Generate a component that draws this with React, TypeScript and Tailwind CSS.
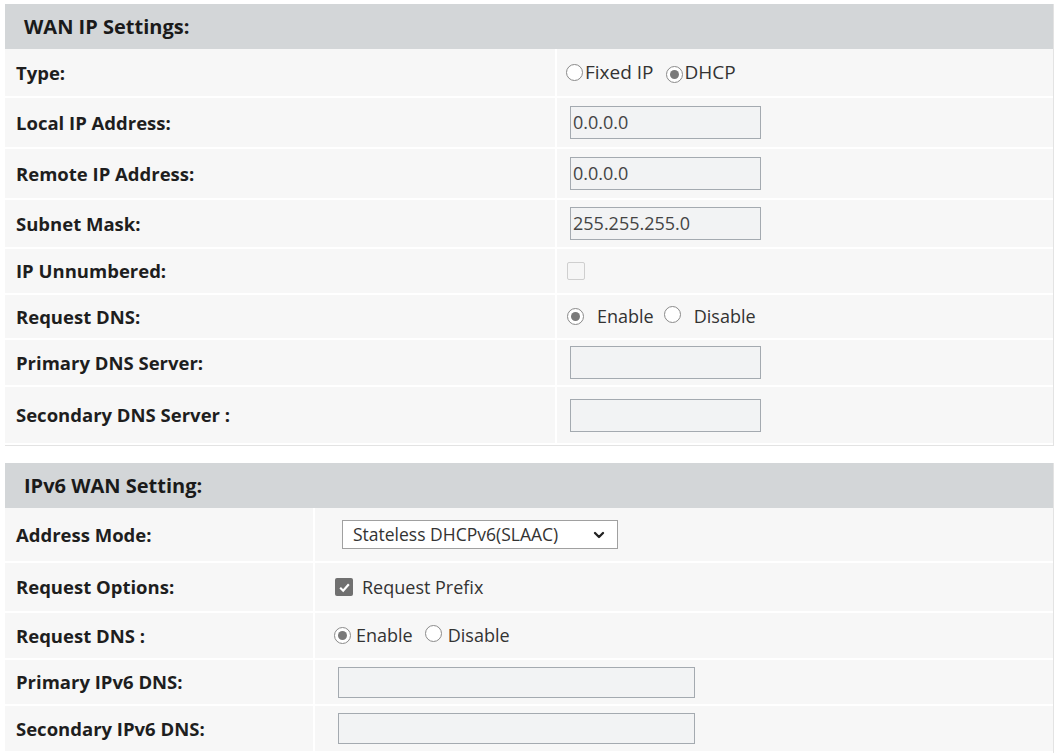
import { ChevronDown } from 'lucide-react';
import type { ReactNode } from 'react';

/* WAN settings form — two gray-headed tables on a white page */

const font = "font-['Open_Sans',sans-serif]";

function Radio({ checked }: { checked?: boolean }) {
  return (
    <span className="inline-flex h-[17px] w-[17px] shrink-0 items-center justify-center rounded-full border border-[#8a8a8a] bg-white">
      {checked && <span className="h-[9px] w-[9px] rounded-full bg-[#7a7a7a]" />}
    </span>
  );
}

function TextBox({ value = '', w = 'w-[191px]', h = 'h-[33px]' }: { value?: string; w?: string; h?: string }) {
  return (
    <div className={`${w} ${h} flex items-center border border-[#a4aab0] bg-[#f2f3f4] pl-[2px] text-[18px] text-[#444]`}>
      {value}
    </div>
  );
}

function Row({
  label,
  h,
  labelW,
  pad,
  children,
}: {
  label: string;
  h: string;
  labelW: string;
  pad: string;
  children?: ReactNode;
}) {
  return (
    <div className={`flex ${h} border-b-2 border-white`}>
      <div className={`${labelW} flex shrink-0 items-center bg-[#f7f7f7] pl-[11px] text-[18.5px] font-bold text-[#1e1e1e]`}>
        {label}
      </div>
      <div className={`ml-[2px] flex flex-1 items-center bg-[#f7f7f7] ${pad}`}>{children}</div>
    </div>
  );
}

function Header({ title }: { title: string }) {
  return (
    <div className="flex h-[45px] items-center bg-[#d3d6d8] pl-[19px] text-[20px] font-bold text-[#1a1a1a]">
      {title}
    </div>
  );
}

export default function App() {
  const w1 = 'w-[550px]';
  const w2 = 'w-[308px]';

  return (
    <div className={`${font} min-h-screen bg-white px-[5px] pt-[4px]`}>
      {/* WAN IP Settings */}
      <div className="border-b border-r border-[#e3e3e3]">
        <Header title="WAN IP Settings:" />
        <Row label="Type:" h="h-[49px]" labelW={w1} pad="pl-[9px]">
          <div className="flex items-center text-[19px] text-[#333]">
            <Radio />
            <span className="ml-[2px]">Fixed IP</span>
            <span className="ml-[12px]">
              <Radio checked />
            </span>
            <span className="ml-[2px]">DHCP</span>
          </div>
        </Row>
        <Row label="Local IP Address:" h="h-[51px]" labelW={w1} pad="pl-[13px]">
          <TextBox value="0.0.0.0" />
        </Row>
        <Row label="Remote IP Address:" h="h-[51px]" labelW={w1} pad="pl-[13px]">
          <TextBox value="0.0.0.0" />
        </Row>
        <Row label="Subnet Mask:" h="h-[49px]" labelW={w1} pad="pl-[13px]">
          <TextBox value="255.255.255.0" />
        </Row>
        <Row label="IP Unnumbered:" h="h-[46px]" labelW={w1} pad="pl-[10px]">
          <span className="h-[18px] w-[18px] rounded-[2px] border border-[#cfcfcf] bg-[#f6f6f6]" />
        </Row>
        <Row label="Request DNS:" h="h-[45px]" labelW={w1} pad="pl-[10px]">
          <div className="flex items-center text-[18px] text-[#333]">
            <Radio checked />
            <span className="ml-[13px]">Enable</span>
            <span className="ml-[10px]">
              <Radio />
            </span>
            <span className="ml-[13px]">Disable</span>
          </div>
        </Row>
        <Row label="Primary DNS Server:" h="h-[47px]" labelW={w1} pad="pl-[13px]">
          <TextBox />
        </Row>
        <Row label="Secondary DNS Server :" h="h-[58px]" labelW={w1} pad="pl-[13px]">
          <TextBox />
        </Row>
      </div>

      <div className="h-[17px]" />

      {/* IPv6 WAN Setting */}
      <div className="border-r border-[#e3e3e3]">
        <Header title="IPv6 WAN Setting:" />
        <Row label="Address Mode:" h="h-[55px]" labelW={w2} pad="pl-[27px]">
          <div className="flex h-[29px] w-[276px] items-center justify-between border border-[#a0a0a0] bg-white pl-[10px] pr-[10px] text-[17.5px] text-[#333]">
            <span>Stateless DHCPv6(SLAAC)</span>
            <ChevronDown size={16} strokeWidth={3.5} className="text-[#222]" />
          </div>
        </Row>
        <Row label="Request Options:" h="h-[50px]" labelW={w2} pad="pl-[20px]">
          <div className="flex items-center text-[18px] text-[#333]">
            <span className="flex h-[18px] w-[18px] items-center justify-center rounded-[2px] bg-[#707070]">
              <svg width="13" height="13" viewBox="0 0 12 12">
                <path d="M2 6.2 L4.8 9 L10 3" fill="none" stroke="#fff" strokeWidth="2" />
              </svg>
            </span>
            <span className="ml-[9px]">Request Prefix</span>
          </div>
        </Row>
        <Row label="Request DNS :" h="h-[47px]" labelW={w2} pad="pl-[19px]">
          <div className="flex items-center text-[18px] text-[#333]">
            <Radio checked />
            <span className="ml-[5px]">Enable</span>
            <span className="ml-[12px]">
              <Radio />
            </span>
            <span className="ml-[6px]">Disable</span>
          </div>
        </Row>
        <Row label="Primary IPv6 DNS:" h="h-[46px]" labelW={w2} pad="pl-[23px]">
          <TextBox w="w-[357px]" h="h-[31px]" />
        </Row>
        <Row label="Secondary IPv6 DNS:" h="h-[47px]" labelW={w2} pad="pl-[23px]">
          <TextBox w="w-[357px]" h="h-[31px]" />
        </Row>
      </div>
    </div>
  );
}
